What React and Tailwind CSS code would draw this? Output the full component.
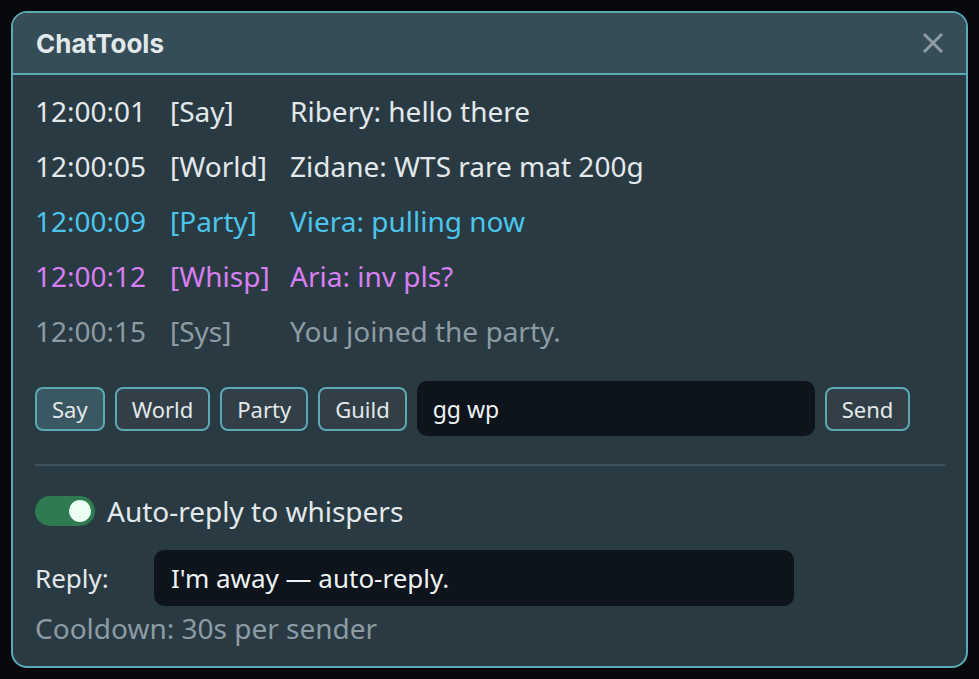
import { useState } from 'react';

const messages = [
  { time: '12:00:01', channel: '[Say]', text: 'Ribery: hello there', color: 'text-[#e3e8ea]' },
  { time: '12:00:05', channel: '[World]', text: 'Zidane: WTS rare mat 200g', color: 'text-[#e3e8ea]' },
  { time: '12:00:09', channel: '[Party]', text: 'Viera: pulling now', color: 'text-[#4cc5ec]' },
  { time: '12:00:12', channel: '[Whisp]', text: 'Aria: inv pls?', color: 'text-[#d77ff0]' },
  { time: '12:00:15', channel: '[Sys]', text: 'You joined the party.', color: 'text-[#8d9ba3]' },
];

const channels = ['Say', 'World', 'Party', 'Guild'];

function ChannelButton({ label, active }) {
  return (
    <button
      className={`h-[44px] rounded-[8px] border-2 border-[#5aa9b5] px-[15px] text-[22px] leading-none text-[#e3e8ea] ${
        active ? 'bg-[#3a5862]' : 'bg-[#323f46]'
      }`}
    >
      {label}
    </button>
  );
}

export default function App() {
  const [draft, setDraft] = useState('gg wp');
  const [reply, setReply] = useState("I'm away — auto-reply.");
  const [autoReply, setAutoReply] = useState(true);

  return (
    <div className="min-h-screen bg-[#07080c] p-[11px] font-['Noto_Sans',sans-serif]">
      <div className="flex h-[657px] w-[957px] flex-col overflow-hidden rounded-[16px] border-2 border-[#5aa9b5] bg-[#2a3a42]">
        <div className="flex h-[62px] shrink-0 items-center justify-between border-b-2 border-[#5aa9b5] bg-[#344d56] pl-[23px] pr-[22px]">
          <div className="font-['Inter',sans-serif] text-[26px] font-bold text-[#e3e8ea]">ChatTools</div>
          <svg width="22" height="22" viewBox="0 0 22 22" className="text-[#8f9ca3]">
            <path d="M2 2L20 20M20 2L2 20" stroke="currentColor" strokeWidth="3" />
          </svg>
        </div>

        <div className="flex flex-1 flex-col px-[22px] pt-[8px]">
          <div className="flex flex-col">
            {messages.map((m) => (
              <div key={m.time} className={`flex h-[55px] items-center text-[28px] ${m.color}`}>
                <span className="w-[135px] shrink-0">{m.time}</span>
                <span className="w-[120px] shrink-0">{m.channel}</span>
                <span>{m.text}</span>
              </div>
            ))}
          </div>

          <div className="mt-[23px] flex items-center gap-[10px]">
            {channels.map((c, i) => (
              <ChannelButton key={c} label={c} active={i === 0} />
            ))}
            <input
              value={draft}
              onChange={(e) => setDraft(e.target.value)}
              className="h-[55px] w-[398px] rounded-[10px] bg-[#0e141b] px-[16px] text-[23px] text-[#eef2f3] outline-none"
            />
            <ChannelButton label="Send" />
          </div>

          <div className="mt-[28px] h-[2px] w-[910px] shrink-0 bg-[#3b525c]" />

          <div className="mt-[30px] flex h-[30px] items-center gap-[12px]">
            <button
              onClick={() => setAutoReply(!autoReply)}
              className="flex h-[30px] w-[60px] items-center justify-end rounded-full bg-[#2f7a51] px-[4px]"
            >
              <span className="h-[22px] w-[22px] rounded-full bg-[#eafff1]" />
            </button>
            <span className="text-[28px] leading-none text-[#e3e8ea]">Auto-reply to whispers</span>
          </div>

          <div className="mt-[24px] flex h-[56px] items-center">
            <span className="w-[119px] shrink-0 text-[26px] text-[#e3e8ea]">Reply:</span>
            <input
              value={reply}
              onChange={(e) => setReply(e.target.value)}
              className="h-[56px] w-[640px] rounded-[10px] bg-[#0e141b] px-[17px] text-[26px] text-[#eef2f3] outline-none"
            />
          </div>

          <div className="mt-[4px] text-[28px] leading-[36px] text-[#8d9ba3]">Cooldown: 30s per sender</div>
        </div>
      </div>
    </div>
  );
}
